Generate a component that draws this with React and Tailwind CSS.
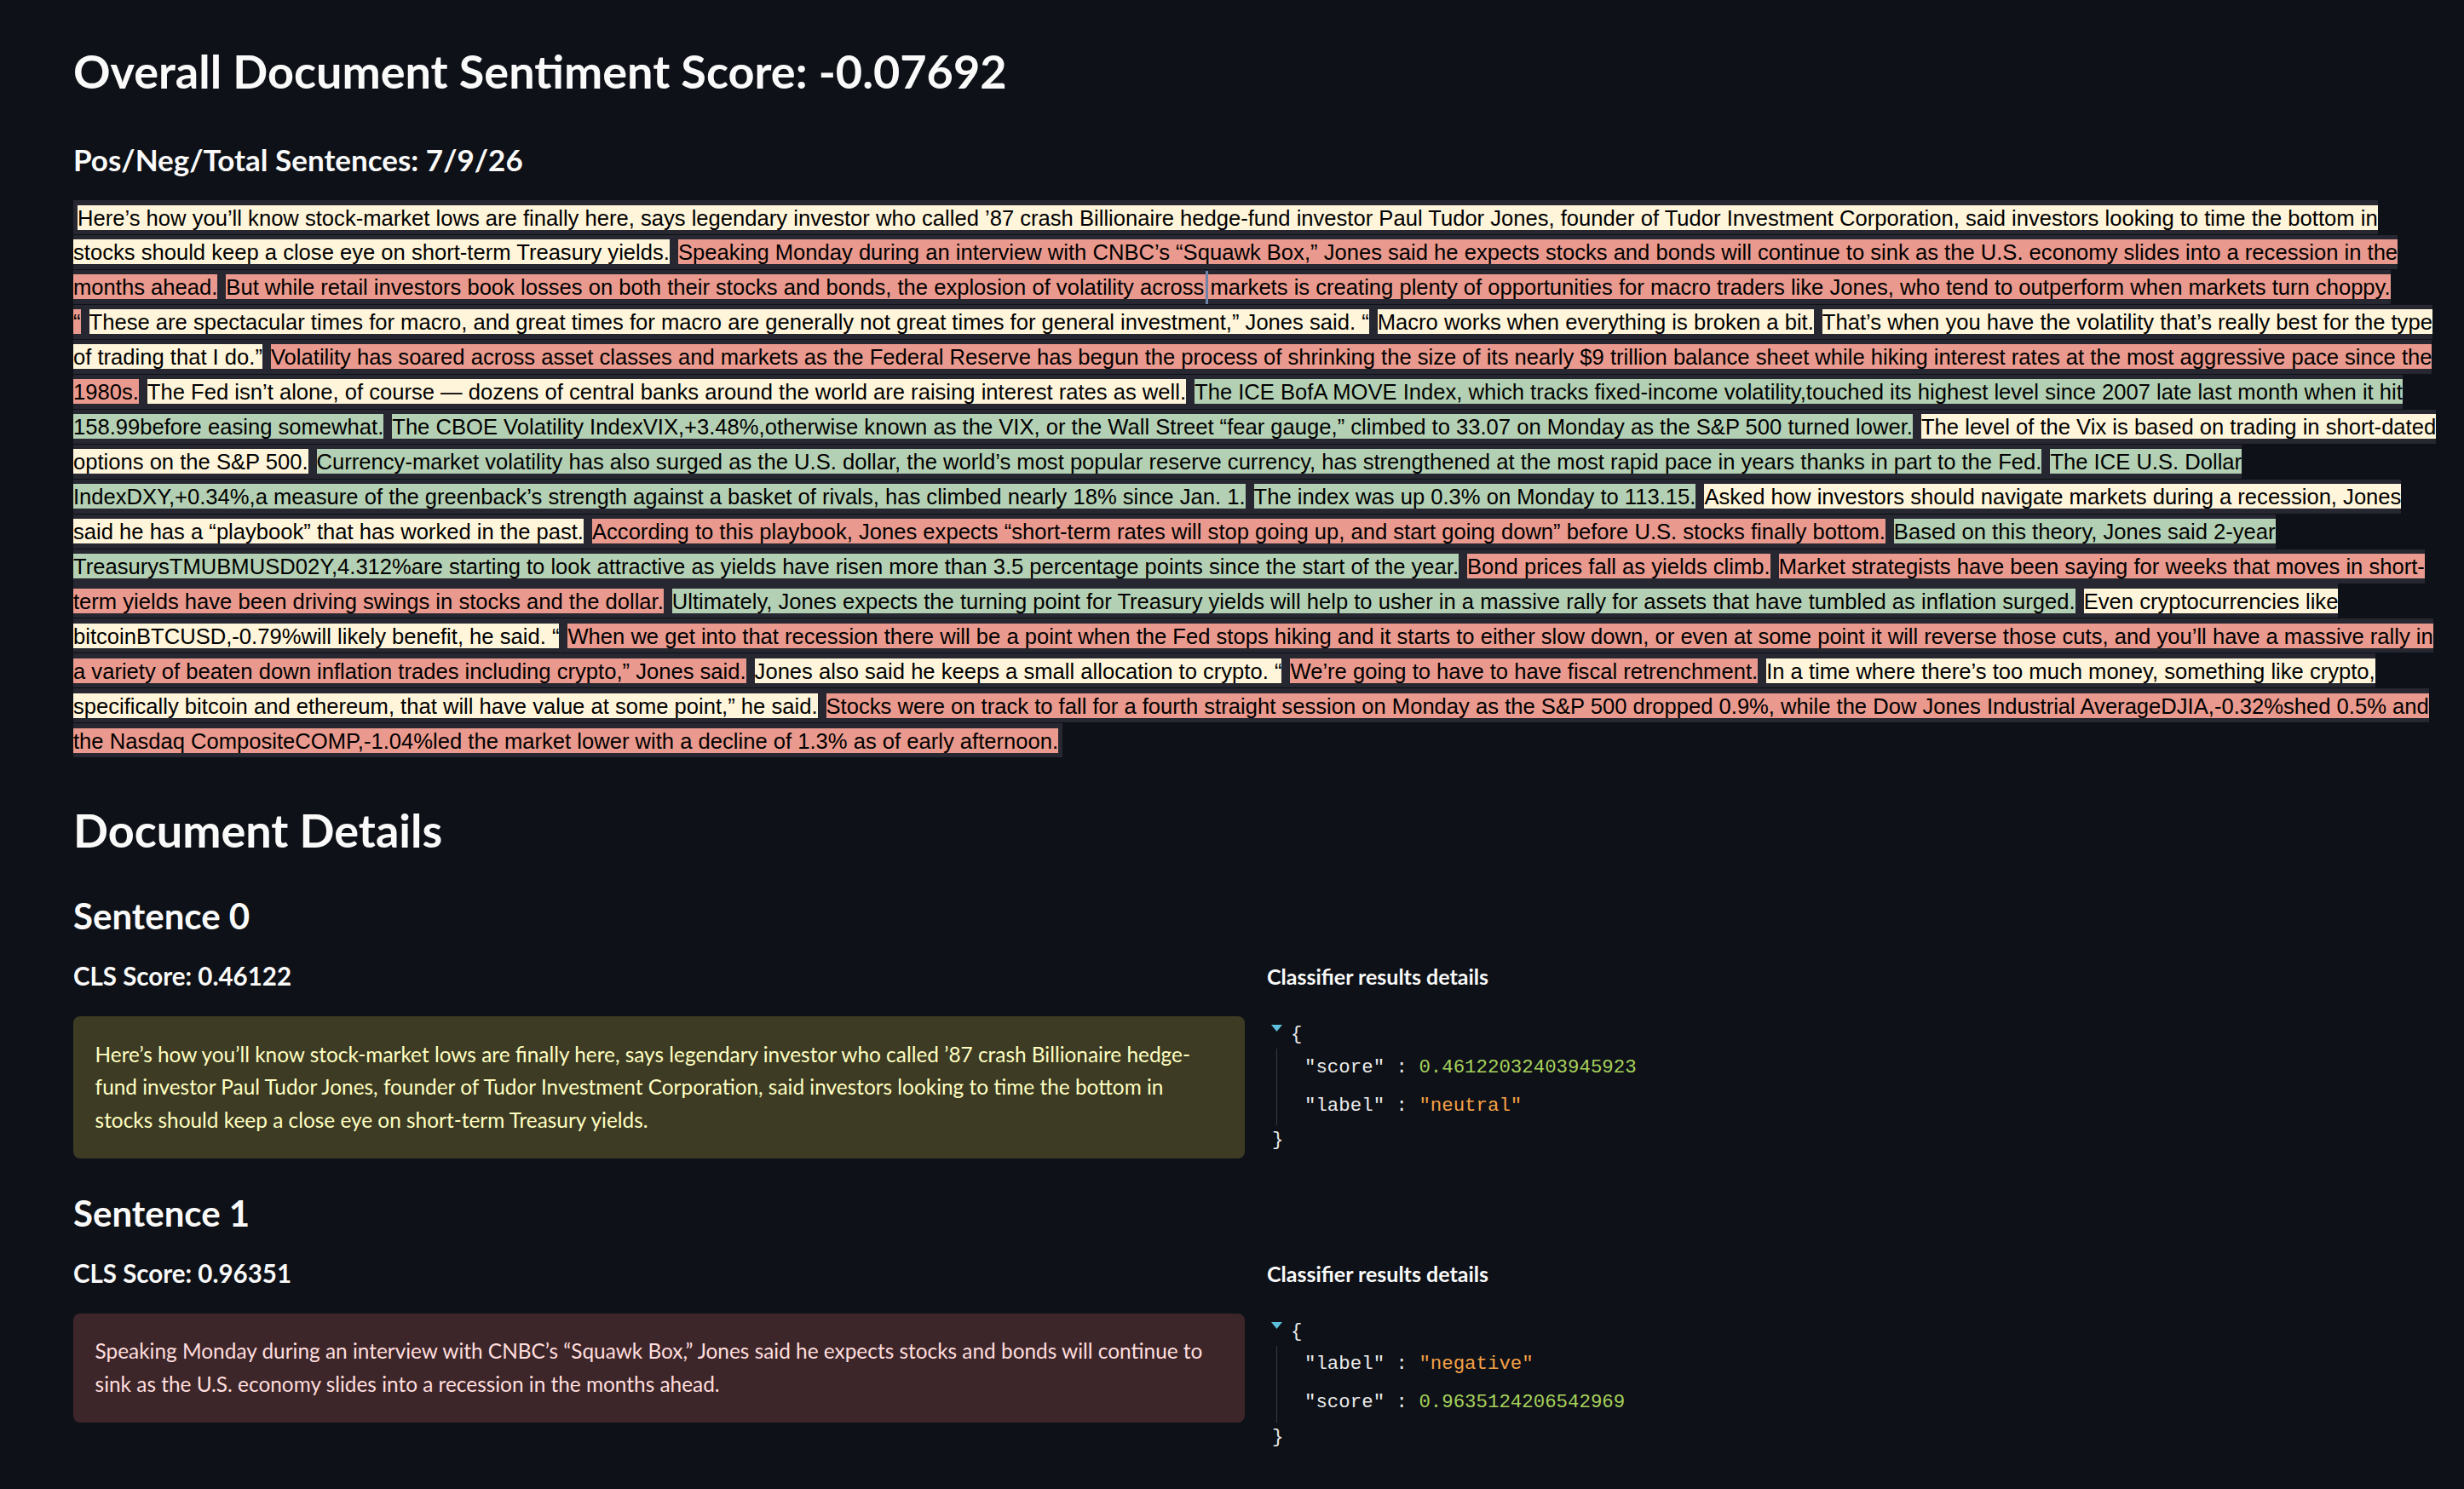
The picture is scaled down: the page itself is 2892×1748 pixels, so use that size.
import React from "react";

const HL = {
  neu: "bg-[#fff5da]",
  neg: "bg-[#e9998d]",
  pos: "bg-[#b4d0b4]",
};

const Caret = () => (
  <span className="relative">
    {" "}
    <span className="absolute left-[2px] top-[-5px] h-[39px] w-[3px] bg-[#7083a9]" />
  </span>
);

const sentences = [
  ["neu", "Here’s how you’ll know stock-market lows are finally here, says legendary investor who called ’87 crash Billionaire hedge-fund investor Paul Tudor Jones, founder of Tudor Investment Corporation, said investors looking to time the bottom in stocks should keep a close eye on short-term Treasury yields."],
  ["neg", "Speaking Monday during an interview with CNBC’s “Squawk Box,” Jones said he expects stocks and bonds will continue to sink as the U.S. economy slides into a recession in the months ahead."],
  ["neg", <>But while retail investors book losses on both their stocks and bonds, the explosion of volatility across<Caret />markets is creating plenty of opportunities for macro traders like Jones, who tend to outperform when markets turn choppy. “</>],
  ["neu", "These are spectacular times for macro, and great times for macro are generally not great times for general investment,” Jones said. “"],
  ["neu", "Macro works when everything is broken a bit."],
  ["neu", "That’s when you have the volatility that’s really best for the type of trading that I do.”"],
  ["neg", "Volatility has soared across asset classes and markets as the Federal Reserve has begun the process of shrinking the size of its nearly $9 trillion balance sheet while hiking interest rates at the most aggressive pace since the 1980s."],
  ["neu", "The Fed isn’t alone, of course — dozens of central banks around the world are raising interest rates as well."],
  ["pos", "The ICE BofA MOVE Index, which tracks fixed-income volatility,touched its highest level since 2007 late last month when it hit 158.99before easing somewhat."],
  ["pos", "The CBOE Volatility IndexVIX,+3.48%,otherwise known as the VIX, or the Wall Street “fear gauge,” climbed to 33.07 on Monday as the S&P 500 turned lower."],
  ["neu", "The level of the Vix is based on trading in short-dated options on the S&P 500."],
  ["pos", "Currency-market volatility has also surged as the U.S. dollar, the world’s most popular reserve currency, has strengthened at the most rapid pace in years thanks in part to the Fed."],
  ["pos", "The ICE U.S. Dollar IndexDXY,+0.34%,a measure of the greenback’s strength against a basket of rivals, has climbed nearly 18% since Jan. 1."],
  ["pos", "The index was up 0.3% on Monday to 113.15."],
  ["neu", "Asked how investors should navigate markets during a recession, Jones said he has a “playbook” that has worked in the past."],
  ["neg", "According to this playbook, Jones expects “short-term rates will stop going up, and start going down” before U.S. stocks finally bottom."],
  ["pos", "Based on this theory, Jones said 2-year TreasurysTMUBMUSD02Y,4.312%are starting to look attractive as yields have risen more than 3.5 percentage points since the start of the year."],
  ["neg", "Bond prices fall as yields climb."],
  ["neg", "Market strategists have been saying for weeks that moves in short-term yields have been driving swings in stocks and the dollar."],
  ["pos", "Ultimately, Jones expects the turning point for Treasury yields will help to usher in a massive rally for assets that have tumbled as inflation surged."],
  ["neu", "Even cryptocurrencies like bitcoinBTCUSD,-0.79%will likely benefit, he said. “"],
  ["neg", "When we get into that recession there will be a point when the Fed stops hiking and it starts to either slow down, or even at some point it will reverse those cuts, and you’ll have a massive rally in a variety of beaten down inflation trades including crypto,” Jones said."],
  ["neu", "Jones also said he keeps a small allocation to crypto. “"],
  ["neg", "We’re going to have to have fiscal retrenchment."],
  ["neu", "In a time where there’s too much money, something like crypto, specifically bitcoin and ethereum, that will have value at some point,” he said."],
  ["neg", "Stocks were on track to fall for a fourth straight session on Monday as the S&P 500 dropped 0.9%, while the Dow Jones Industrial AverageDJIA,-0.32%shed 0.5% and the Nasdaq CompositeCOMP,-1.04%led the market lower with a decline of 1.3% as of early afternoon."],
];

const details = [
  {
    title: "Sentence 0",
    score: "0.46122",
    box: "bg-[#3d3b23] text-[#ffffc2]",
    text: "Here’s how you’ll know stock-market lows are finally here, says legendary investor who called ’87 crash Billionaire hedge-fund investor Paul Tudor Jones, founder of Tudor Investment Corporation, said investors looking to time the bottom in stocks should keep a close eye on short-term Treasury yields.",
    json: [
      ["score", "0.46122032403945923", "num"],
      ["label", "\"neutral\"", "str"],
    ],
  },
  {
    title: "Sentence 1",
    score: "0.96351",
    box: "bg-[#3d2629] text-[#ffdede]",
    text: "Speaking Monday during an interview with CNBC’s “Squawk Box,” Jones said he expects stocks and bonds will continue to sink as the U.S. economy slides into a recession in the months ahead.",
    json: [
      ["label", "\"negative\"", "str"],
      ["score", "0.9635124206542969", "num"],
    ],
  },
];

const JsonView = ({ rows }) => (
  <div className="font-['Liberation_Mono',monospace] text-[22.4px] text-[#ececec]">
    <div className="flex h-[30px]">
      <svg className="ml-[5px] mt-[4px]" width="13" height="8" viewBox="0 0 13 8">
        <path d="M0 0H13L6.5 8Z" fill="#5ebfdc" />
      </svg>
      <span className="ml-[10px] leading-[30px]">{"{"}</span>
    </div>
    <div className="ml-[11px] mt-[2px] border-l border-[#3a3c44] pl-[32px]">
      {rows.map(([k, v, t]) => (
        <div key={k} className="flex h-[45px] items-center whitespace-pre">
          <span>"{k}"</span>
          <span> : </span>
          <span className={t === "num" ? "text-[#a6d25c]" : "text-[#f5a247]"}>{v}</span>
        </div>
      ))}
    </div>
    <div className="ml-[6px] flex h-[36px] items-center">{"}"}</div>
  </div>
);

export default function App() {
  return (
    <div className="min-h-screen w-full bg-[#0e1117] text-[#fafafa]">
      <div className="ml-[86px] w-[2776px] pb-[60px] pt-[51px] font-['Lato',sans-serif]">
        <h1 className="text-[54px] font-bold leading-[66px]">Overall Document Sentiment Score: -0.07692</h1>
        <h3 className="mt-[49px] text-[35px] font-bold leading-[42px]">Pos/Neg/Total Sentences: 7/9/26</h3>

        <div className="mt-[27px] font-['Liberation_Sans',Arial,sans-serif] text-[25.6px] leading-[40.96px] text-black">
          <span className="bg-[#262730] py-[6px]">
            {sentences.map(([kind, text], i) => (
              <span key={i} className={`${HL[kind]} mx-[5px] py-[0.5px]`}>{text}</span>
            ))}
          </span>
        </div>

        <h2 className="mt-[52px] text-[54px] font-bold leading-[66px]">Document Details</h2>

        {details.map((d, i) => (
          <section key={d.title} className={i === 0 ? "mt-[41px]" : "mt-[38px]"}>
            <h3 className="text-[42px] font-bold leading-[52px]">{d.title}</h3>
            <div className="mt-[27px] grid grid-cols-2 gap-x-[26px]">
              <div>
                <h4 className="text-[29.5px] font-bold leading-[36px]">CLS Score: {d.score}</h4>
                <div className={`mt-[29px] rounded-[8px] p-[25.6px] text-[24.4px] leading-[38.4px] ${d.box}`}>
                  {d.text}
                </div>
              </div>
              <div className="pt-[3px]">
                <p className="text-[25px] font-bold leading-[30px]">Classifier results details</p>
                <div className="mt-[38px]">
                  <JsonView rows={d.json} />
                </div>
              </div>
            </div>
          </section>
        ))}
      </div>
    </div>
  );
}
